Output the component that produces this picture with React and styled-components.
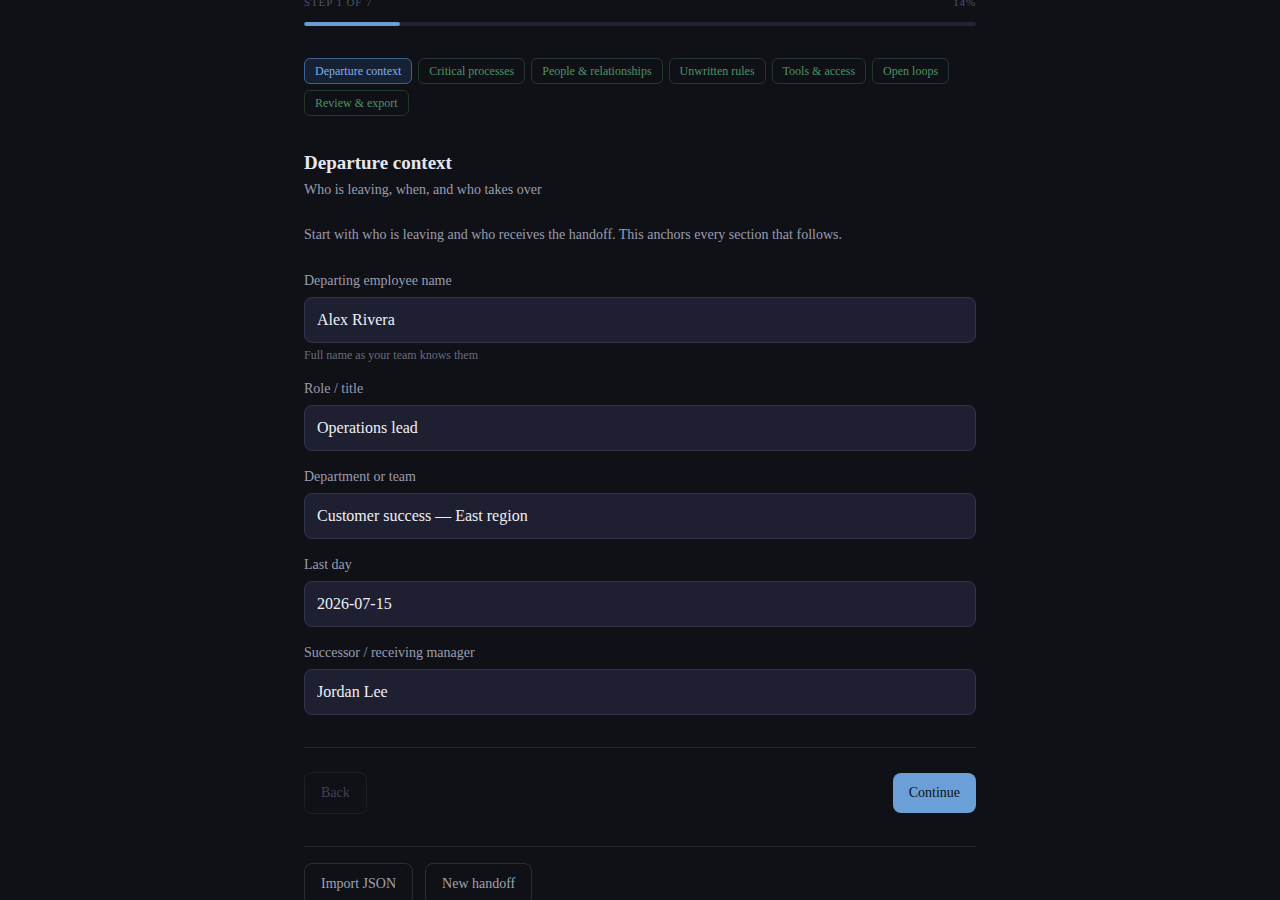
import React from 'react';
import styled, { createGlobalStyle } from 'styled-components';

const steps = [
  'Departure context',
  'Critical processes',
  'People & relationships',
  'Unwritten rules',
  'Tools & access',
  'Open loops',
  'Review & export',
];

const fields = [
  { label: 'Departing employee name', value: 'Alex Rivera', hint: 'Full name as your team knows them' },
  { label: 'Role / title', value: 'Operations lead' },
  { label: 'Department or team', value: 'Customer success — East region' },
  { label: 'Last day', value: '2026-07-15' },
  { label: 'Successor / receiving manager', value: 'Jordan Lee' },
];

const App = () => (
  <>
    <GlobalStyle />
    <Page>
      <Meta>
        <span>Step 1 of 7</span>
        <span>14%</span>
      </Meta>
      <Track>
        <Fill style={{ width: `${(1 / 7) * 100}%` }} />
      </Track>

      <Tabs>
        {steps.map((s, i) => (
          <Tab key={s} $active={i === 0}>{s}</Tab>
        ))}
      </Tabs>

      <Title>Departure context</Title>
      <Subtitle>Who is leaving, when, and who takes over</Subtitle>
      <Intro>Start with who is leaving and who receives the handoff. This anchors every section that follows.</Intro>

      <Fields>
        {fields.map((f) => (
          <Field key={f.label}>
            <Label>{f.label}</Label>
            <Input defaultValue={f.value} />
            {f.hint && <Hint>{f.hint}</Hint>}
          </Field>
        ))}
      </Fields>

      <Divider />
      <Nav>
        <GhostButton disabled>Back</GhostButton>
        <PrimaryButton>Continue</PrimaryButton>
      </Nav>
      <Divider />
      <Extras>
        <OutlineButton>Import JSON</OutlineButton>
        <OutlineButton>New handoff</OutlineButton>
      </Extras>
    </Page>
  </>
);

const GlobalStyle = createGlobalStyle`
  body {
    margin: 0;
    background: #101116;
    font-family: "Liberation Serif", "Times New Roman", serif;
  }
`;

const Page = styled.div`
  max-width: 672px;
  margin: -5px auto 0;
  padding-bottom: 40px;
`;

const Meta = styled.div`
  display: flex;
  justify-content: space-between;
  font-size: 11px;
  line-height: 14px;
  letter-spacing: 0.08em;
  text-transform: uppercase;
  color: #4f5366;
`;

const Track = styled.div`
  margin-top: 13px;
  height: 4px;
  border-radius: 2px;
  background: #202236;
  overflow: hidden;
`;

const Fill = styled.div`
  height: 100%;
  background: #6a9fd6;
  border-radius: 2px;
`;

const Tabs = styled.div`
  display: flex;
  flex-wrap: wrap;
  gap: 6px;
  margin-top: 32px;
`;

const Tab = styled.button`
  height: 26px;
  padding: 0 10px;
  border-radius: 6px;
  font-family: inherit;
  font-size: 12px;
  border: 1px solid ${(p) => (p.$active ? '#3d6292' : '#22382b')};
  background: ${(p) => (p.$active ? '#172134' : 'transparent')};
  color: ${(p) => (p.$active ? '#7db0ea' : '#4e9266')};
  cursor: pointer;
`;

const Title = styled.h2`
  margin: 35px 0 0;
  font-size: 19px;
  line-height: 24px;
  font-weight: bold;
  color: #e6e7ee;
`;

const Subtitle = styled.p`
  margin: 6px 0 0;
  font-size: 14px;
  line-height: 18px;
  color: #9a9db0;
`;

const Intro = styled.p`
  margin: 27px 0 0;
  font-size: 14px;
  line-height: 18px;
  color: #9a9db0;
`;

const Fields = styled.div`
  display: flex;
  flex-direction: column;
  gap: 17px;
  margin-top: 28px;
`;

const Field = styled.div`
  display: flex;
  flex-direction: column;
`;

const Label = styled.label`
  font-size: 14px;
  line-height: 18px;
  color: #9a9db0;
  margin-bottom: 7px;
`;

const Input = styled.input`
  box-sizing: border-box;
  height: 46px;
  padding: 0 12px;
  border: 1px solid #33364a;
  border-radius: 8px;
  background: #1e2032;
  color: #eef0f6;
  font-family: inherit;
  font-size: 16px;
  outline: none;
`;

const Hint = styled.span`
  margin-top: 5px;
  font-size: 12px;
  line-height: 15px;
  color: #676b80;
`;

const Divider = styled.hr`
  margin: 32px 0 0;
  border: 0;
  border-top: 1px solid #22242e;
`;

const Nav = styled.div`
  display: flex;
  justify-content: space-between;
  align-items: center;
  margin-top: 24px;
`;

const BaseButton = styled.button`
  box-sizing: border-box;
  padding: 0 16px;
  border-radius: 8px;
  font-family: inherit;
  font-size: 14px;
  cursor: pointer;
`;

const GhostButton = styled(BaseButton)`
  height: 42px;
  background: transparent;
  border: 1px solid #1d1f28;
  color: #3e4152;
  cursor: default;
`;

const PrimaryButton = styled(BaseButton)`
  height: 40px;
  background: #6a9fd8;
  border: 0;
  color: #0f1117;
`;

const Extras = styled.div`
  display: flex;
  gap: 12px;
  margin-top: 16px;
`;

const OutlineButton = styled(BaseButton)`
  height: 42px;
  background: transparent;
  border: 1px solid #2a2c38;
  color: #a0a3b5;
`;

export default App;
